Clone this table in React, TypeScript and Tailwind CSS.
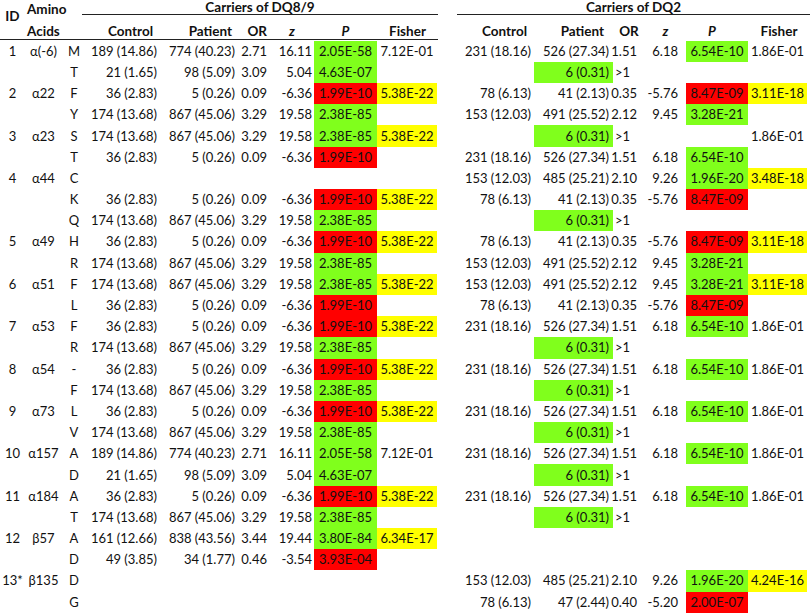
import React from "react";

type Fill = "g" | "r" | "y" | "";

type Left = [string, string, string, string, string, Fill, string, Fill];
type Right = [string, string, boolean, string, string, string, Fill, string, Fill];

type Row = { id?: string; aa?: string; res: string; l?: Left; r?: Right };

const big: Left = ["174 (13.68)", "867 (45.06)", "3.29", "19.58", "2.38E-85", "g", "", ""];
const bigY: Left = ["174 (13.68)", "867 (45.06)", "3.29", "19.58", "2.38E-85", "g", "5.38E-22", "y"];
const low: Left = ["36 (2.83)", "5 (0.26)", "0.09", "-6.36", "1.99E-10", "r", "", ""];
const lowY: Left = ["36 (2.83)", "5 (0.26)", "0.09", "-6.36", "1.99E-10", "r", "5.38E-22", "y"];
const m1: Left = ["189 (14.86)", "774 (40.23)", "2.71", "16.11", "2.05E-58", "g", "7.12E-01", ""];
const m2: Left = ["21 (1.65)", "98 (5.09)", "3.09", "5.04", "4.63E-07", "g", "", ""];

const six: Right = ["", "6 (0.31)", true, ">1", "", "", "", "", ""];
const r231: Right = ["231 (18.16)", "526 (27.34)", false, "1.51", "6.18", "6.54E-10", "g", "1.86E-01", ""];
const r231n: Right = ["231 (18.16)", "526 (27.34)", false, "1.51", "6.18", "6.54E-10", "g", "", ""];
const r78: Right = ["78 (6.13)", "41 (2.13)", false, "0.35", "-5.76", "8.47E-09", "r", "", ""];
const r78Y: Right = ["78 (6.13)", "41 (2.13)", false, "0.35", "-5.76", "8.47E-09", "r", "3.11E-18", "y"];
const r153: Right = ["153 (12.03)", "491 (25.52)", false, "2.12", "9.45", "3.28E-21", "g", "", ""];
const r153Y: Right = ["153 (12.03)", "491 (25.52)", false, "2.12", "9.45", "3.28E-21", "g", "3.11E-18", "y"];
const r485: Right = ["153 (12.03)", "485 (25.21)", false, "2.10", "9.26", "1.96E-20", "g", "3.48E-18", "y"];

const rows: Row[] = [
  { id: "1", aa: "α(-6)", res: "M", l: m1, r: r231 },
  { res: "T", l: m2, r: six },
  { id: "2", aa: "α22", res: "F", l: lowY, r: r78Y },
  { res: "Y", l: big, r: r153 },
  { id: "3", aa: "α23", res: "S", l: bigY, r: ["", "6 (0.31)", true, ">1", "", "", "", "1.86E-01", ""] },
  { res: "T", l: low, r: r231n },
  { id: "4", aa: "α44", res: "C", r: r485 },
  { res: "K", l: lowY, r: r78 },
  { res: "Q", l: big, r: six },
  { id: "5", aa: "α49", res: "H", l: lowY, r: r78Y },
  { res: "R", l: big, r: r153 },
  { id: "6", aa: "α51", res: "F", l: bigY, r: r153Y },
  { res: "L", l: low, r: r78 },
  { id: "7", aa: "α53", res: "F", l: lowY, r: r231 },
  { res: "R", l: big, r: six },
  { id: "8", aa: "α54", res: "-", l: lowY, r: r231 },
  { res: "F", l: big, r: six },
  { id: "9", aa: "α73", res: "L", l: lowY, r: r231 },
  { res: "V", l: big, r: six },
  { id: "10", aa: "α157", res: "A", l: m1, r: r231 },
  { res: "D", l: m2, r: six },
  { id: "11", aa: "α184", res: "A", l: lowY, r: r231 },
  { res: "T", l: big, r: six },
  { id: "12", aa: "β57", res: "A", l: ["161 (12.66)", "838 (43.56)", "3.44", "19.44", "3.80E-84", "g", "6.34E-17", "y"] },
  { res: "D", l: ["49 (3.85)", "34 (1.77)", "0.46", "-3.54", "3.93E-04", "r", "", ""] },
  { id: "13*", aa: "β135", res: "D", r: ["153 (12.03)", "485 (25.21)", false, "2.10", "9.26", "1.96E-20", "g", "4.24E-16", "y"] },
  { res: "G", r: ["78 (6.13)", "47 (2.44)", false, "0.40", "-5.20", "2.00E-07", "r", "", ""] },
];

function bg(f: Fill) {
  if (f === "g") return "bg-[#80ff1c]";
  if (f === "r") return "bg-[#ff0000]";
  if (f === "y") return "bg-[#ffff00]";
  return "";
}

function DataRow({ row }: { row: Row }) {
  const l = row.l;
  const r = row.r;
  return (
    <div className="flex h-[21.2px] items-stretch">
      <div className="w-[25px] flex items-center justify-center">{row.id}</div>
      <div className="w-[37px] flex items-center justify-center">{row.aa}</div>
      <div className="w-[24px] flex items-center justify-center">{row.res}</div>
      <div className="w-[74px] flex items-center justify-end pr-[3px]">{l?.[0]}</div>
      <div className="w-[78px] flex items-center justify-end pr-[3px]">{l?.[1]}</div>
      <div className="w-[32px] flex items-center justify-end pr-[3px]">{l?.[2]}</div>
      <div className="w-[44px] flex items-center justify-end pr-[2px]">{l?.[3]}</div>
      <div className={`w-[63px] flex items-center justify-center ${l ? bg(l[5]) : ""}`}>{l?.[4]}</div>
      <div className={`w-[60px] flex items-center justify-center ${l ? bg(l[7]) : ""}`}>{l?.[6]}</div>
      <div className="w-[20px]" />
      <div className="w-[77px] flex items-center justify-end pr-[3px]">{r?.[0]}</div>
      <div className={`w-[79px] flex items-center justify-end pr-[4px] ${r && r[2] ? "bg-[#80ff1c]" : ""}`}>{r?.[1]}</div>
      <div className={`w-[24px] flex items-center ${r && r[3] === ">1" ? "justify-start pl-[2px]" : "justify-end"}`}>{r?.[3]}</div>
      <div className="w-[49px] flex items-center justify-end pr-[8px]">{r?.[4]}</div>
      <div className={`w-[62px] flex items-center justify-center ${r ? bg(r[6]) : ""}`}>{r?.[5]}</div>
      <div className={`w-[59px] flex items-center justify-center ${r ? bg(r[8]) : ""}`}>{r?.[7]}</div>
    </div>
  );
}

export default function App() {
  return (
    <div className="w-[810px] h-[616px] bg-white text-[#111] text-[13px] leading-[15px] whitespace-nowrap overflow-hidden [font-family:Lato,'Open_Sans',sans-serif]">
      <div className="flex h-[40px] font-bold text-[13.5px]">
        <div className="flex w-[438px] h-[40px] border-b border-[#222]">
          <div className="w-[25px] pt-[9px] text-center">ID</div>
          <div className="w-[57px] flex flex-col gap-[7px] pt-[2px] pl-[2px]">
            <span>Amino</span>
            <span>Acids</span>
          </div>
          <div className="w-[356px] flex flex-col">
            <div className="h-[15px] border-b border-[#222] text-center">Carriers of DQ8/9</div>
            <div className="flex flex-1 items-end">
              <div className="w-[78px] text-right pr-[7px]">Control</div>
              <div className="w-[78px] text-right pr-[6px]">Patient</div>
              <div className="w-[32px] text-right pr-[3px]">OR</div>
              <div className="w-[44px] text-center italic">z</div>
              <div className="w-[63px] text-center italic">P</div>
              <div className="w-[61px] text-center">Fisher</div>
            </div>
          </div>
        </div>
        <div className="w-[19px]" />
        <div className="w-[353px] flex flex-col">
          <div className="h-[15px] border-b border-[#222] text-center">Carriers of DQ2</div>
          <div className="flex flex-1 items-end pb-[1px]">
            <div className="w-[77px] text-right pr-[7px]">Control</div>
            <div className="w-[79px] text-right pr-[9px]">Patient</div>
            <div className="w-[32px] text-center">OR</div>
            <div className="w-[41px] text-center italic">z</div>
            <div className="w-[62px] text-center italic pr-[10px]">P</div>
            <div className="w-[62px] text-center">Fisher</div>
          </div>
        </div>
      </div>
      <div className="pt-[0.7px]">
        {rows.map((row, i) => (
          <DataRow key={i} row={row} />
        ))}
      </div>
    </div>
  );
}
